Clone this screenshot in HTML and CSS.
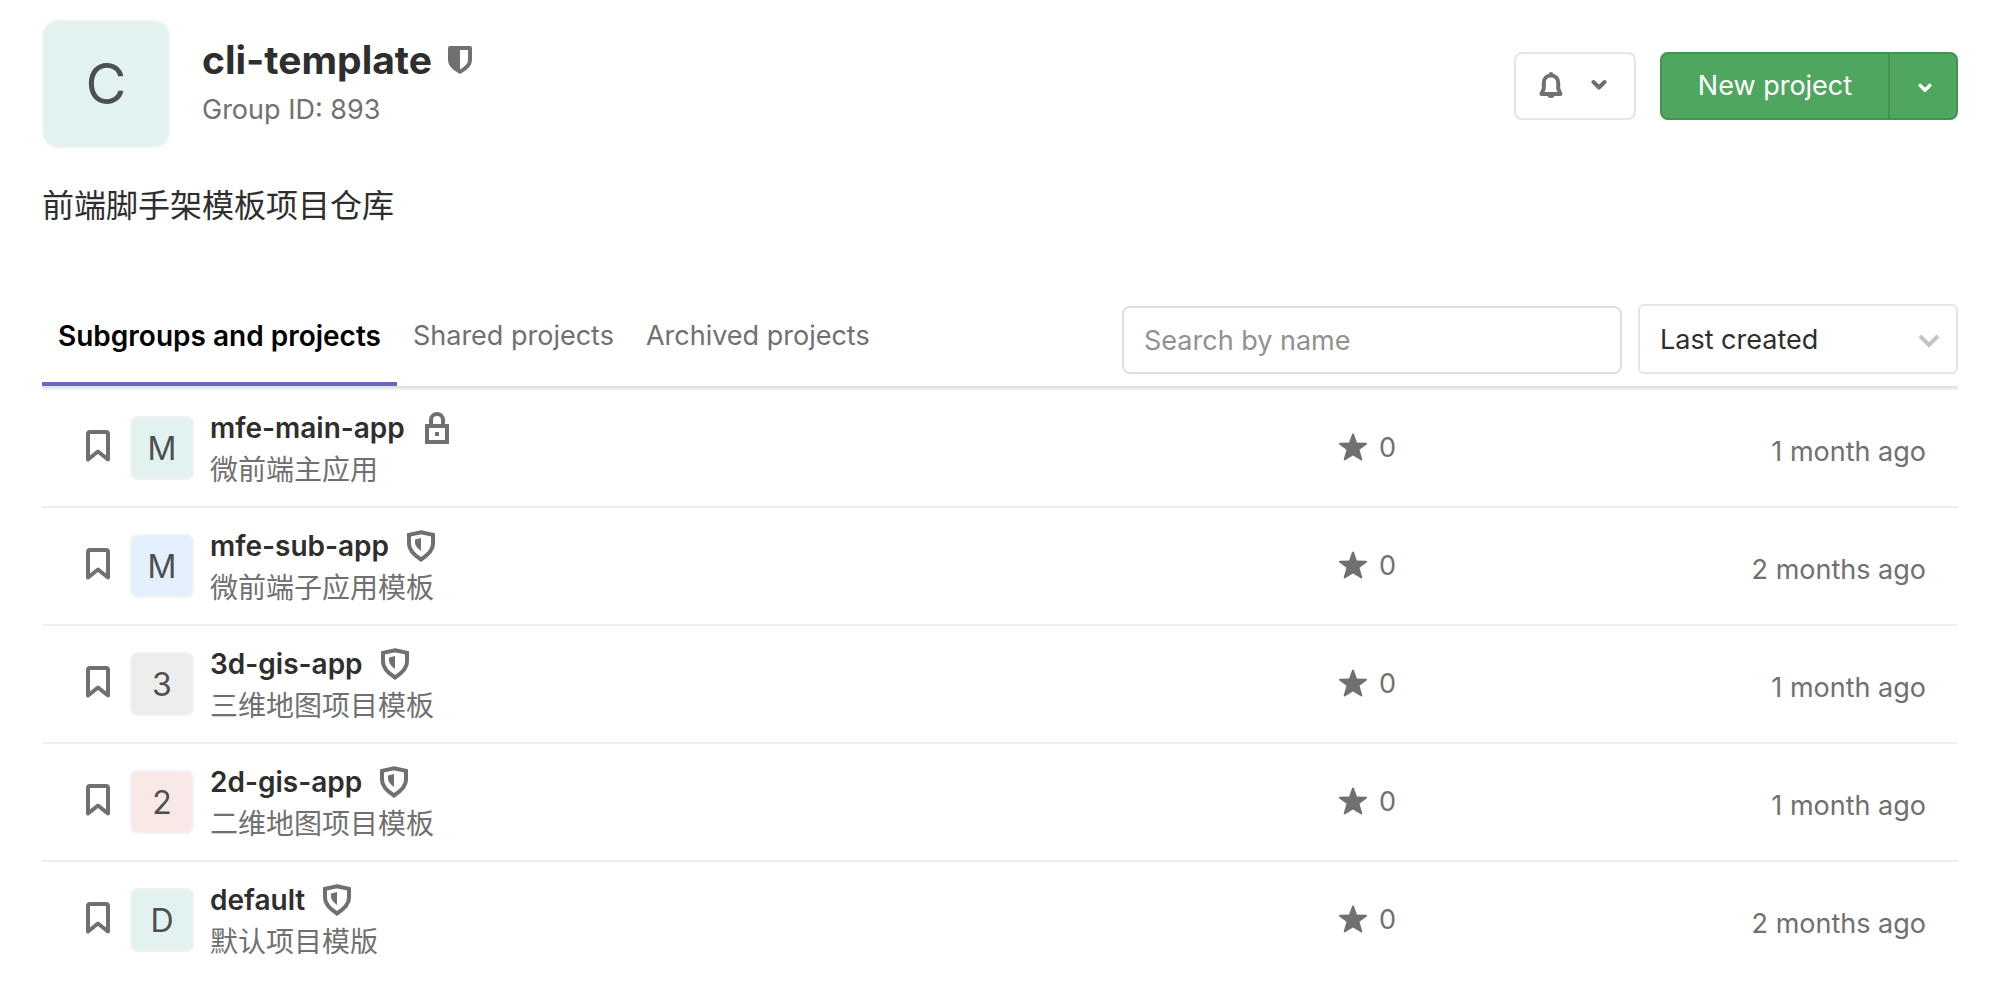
FILE: index.html
```html
<!DOCTYPE html>
<html lang="en">
<head>
    <meta charset="UTF-8">
    <meta name="viewport" content="width=device-width, initial-scale=1.0">
    <title>cli-template</title>
    <link rel="stylesheet" href="styles.css">
</head>
<body>
    <svg class="sprite" aria-hidden="true">
        <symbol id="bookmark" viewBox="0 0 24 32">
            <path d="M2 29.500V4a2 2 0 0 1 2-2h16a2 2 0 0 1 2 2v25.500l-10-8z" fill="none" stroke="currentColor" stroke-width="4" stroke-linejoin="round"/>
        </symbol>
        <symbol id="shield" viewBox="0 0 28 32">
            <path d="M14 2.200l12 2.600v9.200c0 5-4.500 10.600-12 15.500C6.500 24.600 2 19 2 14V4.800z" fill="none" stroke="currentColor" stroke-width="4"/>
            <path d="M14 8v13c-3.500-2.600-6-5.500-6-8V9.500z" fill="currentColor"/>
        </symbol>
        <symbol id="lock" viewBox="0 0 24 32">
            <path d="M6 13V8a6 6 0 0 1 12 0v5" fill="none" stroke="currentColor" stroke-width="4"/>
            <path d="M2 14h20v16H2z" fill="none" stroke="currentColor" stroke-width="4"/>
            <path d="M10 20h4v4h-4z" fill="currentColor"/>
        </symbol>
        <symbol id="star" viewBox="0 0 28 28">
            <path d="M13 1.300c.3-1.200 1.700-1.200 2 0l2.900 8.200 9.200.3c1 .1 1.300 1.100.5 1.700l-7.100 5.300 2.800 9.500c.2 1-.6 1.500-1.400 1L14 22.400l-7.900 4.900c-.8.5-1.600-.1-1.400-1l2.800-9.500L.4 11.500c-.8-.6-.5-1.600.5-1.700l9.200-.3z" fill="currentColor"/>
        </symbol>
        <symbol id="chevron" viewBox="0 0 16 12">
            <path d="M2.500 3L8 8.500 13.500 3" fill="none" stroke="currentColor" stroke-width="4" stroke-linecap="round" stroke-linejoin="round"/>
        </symbol>
    </svg>

    <header class="group-header">
        <div class="group-avatar">C</div>
        <div class="group-info">
            <h1>cli-template
                <svg class="icon-group" viewBox="0 0 24 28" aria-label="Internal">
                    <path d="M2 2h20v12c0 5-4 8.500-10 11.700C6 22.500 2 19 2 14z" fill="none" stroke="currentColor" stroke-width="4" stroke-linejoin="round"/>
                    <path d="M2 2h10v23.500C6 22.500 2 19 2 14z" fill="currentColor"/>
                </svg>
            </h1>
            <p>Group ID: 893</p>
        </div>
        <div class="group-buttons">
            <button type="button" class="btn btn-notify" aria-label="Notifications">
                <svg class="icon-bell" viewBox="0 0 24 26" aria-hidden="true">
                    <path d="M12 3.500c-4.500 0-7.200 3-7.200 7.500v5.500L2.500 22h19l-2.300-5.500V11c0-4.500-2.700-7.500-7.200-7.500z" fill="none" stroke="currentColor" stroke-width="4" stroke-linejoin="round"/>
                    <path d="M10 3V2a2 2 0 0 1 4 0v1zM8.500 23h7a3.500 3 0 0 1-7 0z" fill="currentColor"/>
                </svg>
                <svg class="icon-chevron" aria-hidden="true"><use href="#chevron"/></svg>
            </button>
            <div class="btn-group">
                <button type="button" class="btn btn-new">New project</button>
                <button type="button" class="btn btn-toggle" aria-label="More options">
                    <svg class="icon-chevron-small" aria-hidden="true"><use href="#chevron"/></svg>
                </button>
            </div>
        </div>
    </header>

    <p class="description" lang="zh-CN">前端脚手架模板项目仓库</p>

    <div class="top-area">
        <nav class="tabs">
            <a href="#" class="active">Subgroups and projects</a>
            <a href="#">Shared projects</a>
            <a href="#">Archived projects</a>
        </nav>
        <form class="filters">
            <input type="search" class="search" placeholder="Search by name" aria-label="Search by name">
            <div class="sort">
                <select aria-label="Sort by">
                    <option>Last created</option>
                </select>
                <svg class="icon-sort" viewBox="0 0 22 16" aria-hidden="true">
                    <path d="M2 3l9 9 9-9" fill="none" stroke="currentColor" stroke-width="4"/>
                </svg>
            </div>
        </form>
    </div>

    <ul class="projects">
        <li>
            <svg class="icon-bookmark" aria-hidden="true"><use href="#bookmark"/></svg>
            <div class="avatar teal">M</div>
            <div class="project-info">
                <h2><a href="#">mfe-main-app</a> <svg class="icon-lock" aria-label="Private"><use href="#lock"/></svg></h2>
                <p lang="zh-CN">微前端主应用</p>
            </div>
            <div class="stars"><svg class="icon-star" aria-hidden="true"><use href="#star"/></svg> 0</div>
            <time>1 month ago</time>
        </li>
        <li>
            <svg class="icon-bookmark" aria-hidden="true"><use href="#bookmark"/></svg>
            <div class="avatar blue">M</div>
            <div class="project-info">
                <h2><a href="#">mfe-sub-app</a> <svg class="icon-shield" aria-label="Internal"><use href="#shield"/></svg></h2>
                <p lang="zh-CN">微前端子应用模板</p>
            </div>
            <div class="stars"><svg class="icon-star" aria-hidden="true"><use href="#star"/></svg> 0</div>
            <time>2 months ago</time>
        </li>
        <li>
            <svg class="icon-bookmark" aria-hidden="true"><use href="#bookmark"/></svg>
            <div class="avatar gray">3</div>
            <div class="project-info">
                <h2><a href="#">3d-gis-app</a> <svg class="icon-shield" aria-label="Internal"><use href="#shield"/></svg></h2>
                <p lang="zh-CN">三维地图项目模板</p>
            </div>
            <div class="stars"><svg class="icon-star" aria-hidden="true"><use href="#star"/></svg> 0</div>
            <time>1 month ago</time>
        </li>
        <li>
            <svg class="icon-bookmark" aria-hidden="true"><use href="#bookmark"/></svg>
            <div class="avatar red">2</div>
            <div class="project-info">
                <h2><a href="#">2d-gis-app</a> <svg class="icon-shield" aria-label="Internal"><use href="#shield"/></svg></h2>
                <p lang="zh-CN">二维地图项目模板</p>
            </div>
            <div class="stars"><svg class="icon-star" aria-hidden="true"><use href="#star"/></svg> 0</div>
            <time>1 month ago</time>
        </li>
        <li>
            <svg class="icon-bookmark" aria-hidden="true"><use href="#bookmark"/></svg>
            <div class="avatar teal">D</div>
            <div class="project-info">
                <h2><a href="#">default</a> <svg class="icon-shield" aria-label="Internal"><use href="#shield"/></svg></h2>
                <p lang="zh-CN">默认项目模版</p>
            </div>
            <div class="stars"><svg class="icon-star" aria-hidden="true"><use href="#star"/></svg> 0</div>
            <time>2 months ago</time>
        </li>
    </ul>
</body>
</html>
```

FILE: styles.css
```css
* {
    box-sizing: border-box;
}
body {
    font-family: Inter, "Noto Sans CJK SC", sans-serif;
    font-size: 27px;
    line-height: 40px;
    color: #2e2e2e;
    background-color: #fff;
    margin: 0;
    padding: 20px 40px 24px 42px;
}
h1, h2, p, ul {
    margin: 0;
    padding: 0;
}
a {
    color: inherit;
    text-decoration: none;
}
button, input, select {
    font: inherit;
}
svg {
    flex-shrink: 0;
    color: #707070;
}
.sprite {
    display: none;
}

/* group header */
.group-header {
    display: flex;
    align-items: center;
}
.group-avatar {
    width: 128px;
    height: 128px;
    border: 2px solid #f2f2f2;
    border-radius: 16px;
    background-color: #e1f2f1;
    color: #4f4f4f;
    font-size: 56px;
    display: flex;
    align-items: center;
    justify-content: center;
}
.group-info {
    flex: 1;
    margin-left: 32px;
}
.group-info h1 {
    display: flex;
    align-items: center;
    gap: 16px;
    font-size: 39px;
    line-height: 52px;
}
.group-info p {
    line-height: 48px;
    color: #707070;
}
.icon-group {
    width: 24px;
    height: 28px;
}
.group-buttons {
    display: flex;
    gap: 24px;
    padding-top: 4px;
}
.btn {
    height: 68px;
    border: 2px solid #e5e5e5;
    border-radius: 8px;
    background-color: #fff;
    padding: 0;
    display: flex;
    align-items: center;
    justify-content: center;
    cursor: pointer;
}
.btn-notify {
    width: 122px;
    gap: 28px;
    padding: 0 4px 2px 0;
}
.icon-bell {
    width: 24px;
    height: 26px;
}
.icon-chevron {
    width: 16px;
    height: 12px;
}
.icon-chevron-small {
    width: 14px;
    height: 12px;
    color: #fff;
}
.btn-group {
    display: flex;
}
.btn-new, .btn-toggle {
    background-color: #4fa75f;
    border-color: #43924f;
    color: #fff;
}
.btn-new {
    width: 230px;
    border-radius: 8px 0 0 8px;
}
.btn-toggle {
    width: 70px;
    margin-left: -2px;
    padding: 4px 0 0 4px;
    border-radius: 0 8px 8px 0;
}
.description {
    margin-top: 34px;
    font-size: 32px;
    line-height: 48px;
}

/* tabs and filters */
.top-area {
    display: flex;
    justify-content: space-between;
    margin-top: 74px;
    border-bottom: 2px solid #e1e1e1;
}
.tabs {
    display: flex;
    align-items: flex-end;
}
.tabs a {
    padding: 12px 16px 26px;
    border-bottom: 4px solid transparent;
    color: #707070;
}
.tabs a.active {
    color: #000;
    font-size: 28px;
    font-weight: 600;
    border-bottom-color: #6666c4;
}
.filters {
    display: flex;
    align-items: flex-end;
    gap: 16px;
    padding-bottom: 12px;
}
.search {
    width: 500px;
    height: 68px;
    padding: 0 20px;
    border: 2px solid #dfdfdf;
    border-radius: 8px;
    background-color: #fff;
}
.search::placeholder {
    color: #919191;
}
.sort {
    position: relative;
    width: 320px;
}
.sort select {
    display: block;
    width: 100%;
    height: 70px;
    padding: 2px 20px 0;
    border: 2px solid #e5e5e5;
    border-radius: 6px;
    background-color: #fff;
    color: #2e2e2e;
    appearance: none;
}
.icon-sort {
    position: absolute;
    right: 18px;
    top: 29px;
    width: 22px;
    height: 16px;
    color: #c4c4c4;
    pointer-events: none;
}

/* project list */
.projects {
    list-style: none;
}
.projects li {
    display: flex;
    align-items: center;
    height: 118px;
    padding: 0 32px 0 44px;
    border-top: 2px solid #eee;
}
.icon-bookmark {
    width: 24px;
    height: 32px;
    margin: 0 20px 4px 0;
}
.avatar {
    width: 64px;
    height: 64px;
    padding-top: 2px;
    margin-right: 16px;
    border: 2px solid #f2f2f2;
    border-radius: 8px;
    color: #4f4f4f;
    font-size: 32px;
    display: flex;
    align-items: center;
    justify-content: center;
}
.teal {
    background-color: #e1f2f1;
}
.blue {
    background-color: #e4f0fd;
}
.gray {
    background-color: #ededed;
}
.red {
    background-color: #f8e9e6;
}
.project-info {
    flex: 1;
}
.project-info h2 {
    display: flex;
    align-items: center;
    gap: 18px;
    font-size: 28px;
    font-weight: 600;
}
.project-info p {
    padding-top: 2px;
    margin-bottom: -2px;
    font-size: 28px;
    color: #707070;
}
.icon-lock {
    width: 24px;
    height: 32px;
    margin-left: 2px;
}
.icon-shield {
    width: 28px;
    height: 32px;
}
.stars {
    display: flex;
    align-items: center;
    gap: 12px;
    color: #707070;
}
.icon-star {
    width: 28px;
    height: 28px;
    margin-bottom: 2px;
}
.projects time {
    width: 530px;
    padding-top: 8px;
    text-align: right;
    color: #707070;
}
```
